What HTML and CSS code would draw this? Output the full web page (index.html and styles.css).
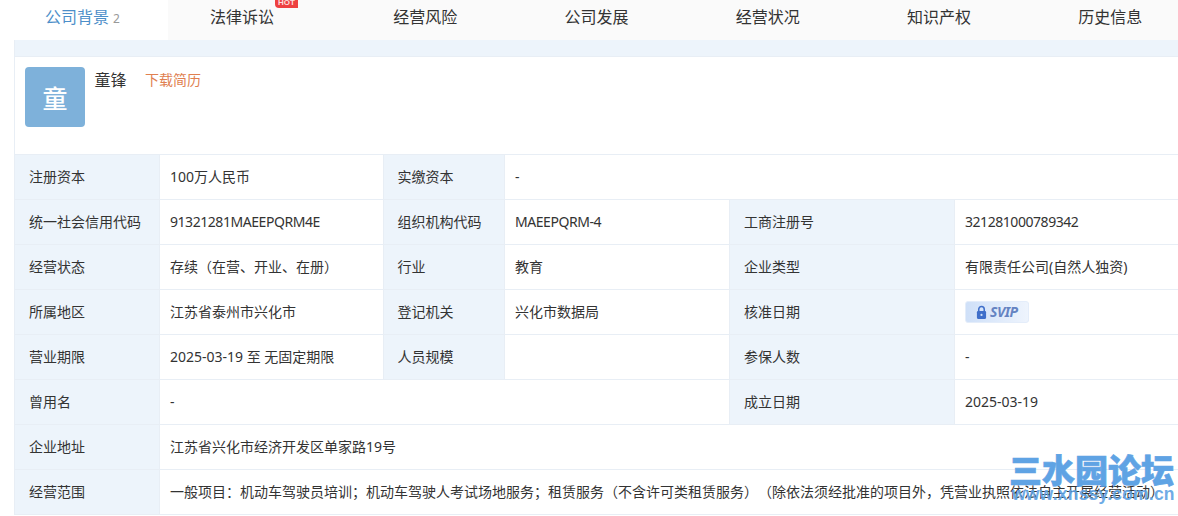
FILE: index.html
```html
<!DOCTYPE html>
<html lang="zh-CN">
<head>
<meta charset="utf-8">
<title>公司背景</title>
<link rel="stylesheet" href="styles.css">
</head>
<body>
<nav class="tabs">
  <a class="tab tab-active">公司背景<span class="tab-count">2</span></a>
  <a class="tab tab-legal">法律诉讼<span class="hot">HOT</span></a>
  <a class="tab">经营风险</a>
  <a class="tab">公司发展</a>
  <a class="tab">经营状况</a>
  <a class="tab">知识产权</a>
  <a class="tab">历史信息</a>
</nav>
<main class="panel">
  <div class="band"></div>
  <section class="person">
    <div class="avatar">童</div>
    <span class="person-name">童锋</span>
    <a class="resume">下载简历</a>
  </section>
  <table class="info">
    <colgroup>
      <col class="c1"><col class="c2"><col class="c3"><col class="c4"><col class="c5"><col class="c6">
    </colgroup>
    <tbody>
      <tr><th>注册资本</th><td>100万人民币</td><th>实缴资本</th><td colspan="3">-</td></tr>
      <tr><th>统一社会信用代码</th><td class="code">91321281MAEEPQRM4E</td><th>组织机构代码</th><td class="code">MAEEPQRM-4</td><th>工商注册号</th><td class="code">321281000789342</td></tr>
      <tr><th>经营状态</th><td>存续（在营、开业、在册）</td><th>行业</th><td>教育</td><th>企业类型</th><td>有限责任公司(自然人独资)</td></tr>
      <tr><th>所属地区</th><td>江苏省泰州市兴化市</td><th>登记机关</th><td>兴化市数据局</td><th>核准日期</th><td><span class="svip"><svg class="lock" viewBox="0 0 12 15" width="11" height="14"><path d="M3 7V4.5a3 3 0 0 1 6 0V7" fill="none" stroke="#3f6fca" stroke-width="1.7"/><rect x="1" y="6.5" width="10" height="8.5" rx="1.2" fill="#3f6fca"/><circle cx="6" cy="10.7" r="1.2" fill="#cfe0f8"/></svg><i>SVIP</i></span></td></tr>
      <tr><th>营业期限</th><td>2025-03-19 至 无固定期限</td><th>人员规模</th><td></td><th>参保人数</th><td>-</td></tr>
      <tr><th>曾用名</th><td colspan="3">-</td><th>成立日期</th><td>2025-03-19</td></tr>
      <tr><th>企业地址</th><td colspan="5">江苏省兴化市经济开发区单家路19号</td></tr>
      <tr><th>经营范围</th><td colspan="5">一般项目：机动车驾驶员培训；机动车驾驶人考试场地服务；租赁服务（不含许可类租赁服务）（除依法须经批准的项目外，凭营业执照依法自主开展经营活动）</td></tr>
    </tbody>
  </table>
</main>
<div class="watermark">
  <div class="wm-cn">三水园论坛</div>
  <div class="wm-en">www.xnssy.com.cn</div>
</div>
</body>
</html>
```
FILE: styles.css
```css
* { box-sizing: border-box; }
html, body { margin: 0; padding: 0; }
body {
  width: 1178px;
  height: 516px;
  overflow: hidden;
  position: relative;
  background: #fff;
  color: #333;
  font-family: "Noto Sans", "Noto Sans CJK SC", sans-serif;
  font-size: 14px;
  text-spacing-trim: space-all;
}
.tabs {
  display: flex;
  height: 40px;
  background: #fafafa;
  font-size: 16px;
  color: #333;
  white-space: nowrap;
}
.tab {
  position: relative;
  flex: none;
  padding: 0 53.63px;
  line-height: 35px;
}
.tab-active {
  width: 168px;
  padding: 0 0 0 45px;
  background: #fff;
  color: #4d8fc9;
}
.tab-legal { padding: 0 65.5px 0 42px; }
.tab-count { margin-left: 4px; font-size: 12px; color: #999; }
.hot {
  position: absolute;
  left: 107px;
  top: -6px;
  width: 23px;
  height: 14px;
  border-radius: 0 4px 0 4px;
  background: #ee4040;
  color: #fbdcdc;
  font-family: "Liberation Sans", sans-serif;
  font-size: 8px;
  font-weight: bold;
  line-height: 17px;
  text-align: center;
}
.panel {
  width: 1178px;
  margin-left: 14px;
  border-left: 1px solid #e8eef5;
}
.band { height: 17px; background: #edf4fb; border-bottom: 1px solid #e8eef5; }
.person {
  display: flex;
  align-items: flex-start;
  height: 97px;
  padding: 10px 0 0 10px;
}
.avatar {
  width: 60px;
  height: 60px;
  border-radius: 4px;
  background: #7eb1da;
  color: #fff;
  font-size: 25px;
  font-weight: 500;
  line-height: 62px;
  text-align: center;
}
.person-name { margin-left: 9.5px; font-size: 16px; line-height: 27px; color: #333; }
.resume { margin-left: 18.5px; font-size: 14px; line-height: 25px; color: #e08050; }
.info {
  table-layout: fixed;
  width: 1163px;
  border-collapse: collapse;
  border-top: 1px solid #e8eef5;
}
.c1 { width: 144.5px; }
.c2 { width: 223.5px; }
.c3 { width: 121.5px; }
.c4 { width: 225px; }
.c5 { width: 225px; }
.c6 { width: 223.5px; }
.info th, .info td {
  height: 45px;
  border: 1px solid #e8eef5;
  border-left: 0;
  font-weight: normal;
  text-align: left;
  white-space: nowrap;
  line-height: 20px;
  padding-bottom: 1px;
}
.info th { padding-left: 14px; background: #edf4fb; color: #333; }
.info td { padding-left: 10px; background: #fff; color: #333; }
.info .code { letter-spacing: -0.45px; }
.svip {
  display: inline-flex;
  align-items: center;
  gap: 3px;
  width: 64px;
  height: 22px;
  padding-left: 10px;
  border: 1px solid #e4edfa;
  border-radius: 3px;
  background: linear-gradient(90deg, #cfe0f8, #eef4fd);
  vertical-align: middle;
}
.svip i {
  font-size: 14px;
  font-weight: bold;
  color: #6483c2;
  letter-spacing: -0.5px;
}
.lock { flex: none; }
.watermark {
  position: absolute;
  left: 1009px;
  top: 451px;
  width: 168px;
  color: #5fa3e4;
  white-space: nowrap;
}
.wm-cn { font-family: "Noto Sans CJK SC", sans-serif; font-size: 33px; font-weight: 900; line-height: 37px; -webkit-text-stroke: 0.6px #5fa3e4; }
.wm-en { margin-top: -2px; padding-left: 3px; font-family: "Liberation Sans", sans-serif; font-size: 17.5px; font-weight: bold; line-height: 17px; letter-spacing: 0.2px; opacity: .9; }
```
